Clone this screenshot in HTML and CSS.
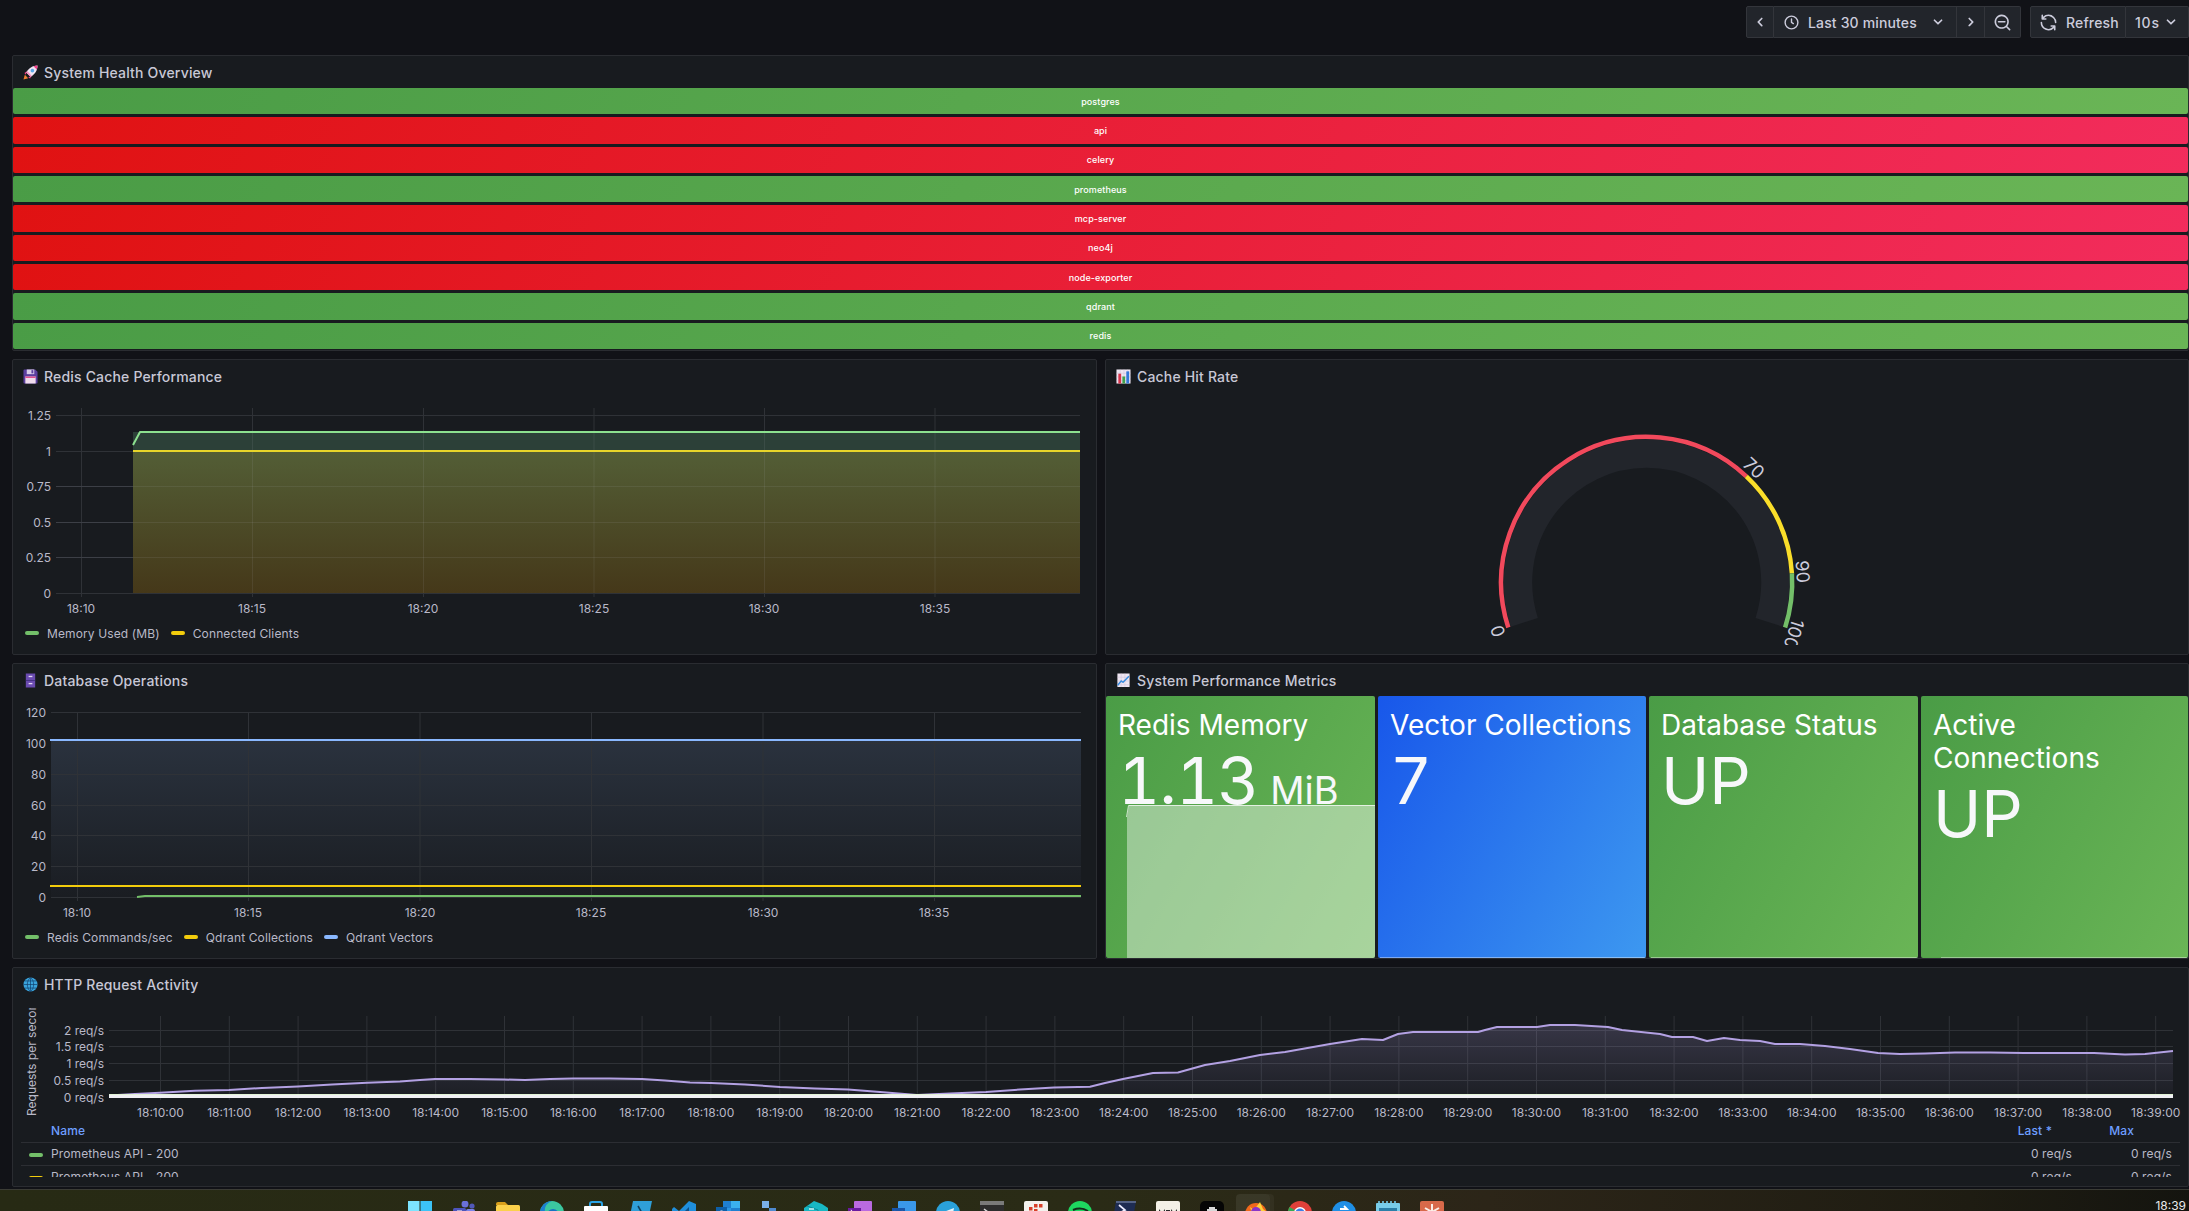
FILE: index.html
```html
<!DOCTYPE html>
<html>
	<head>
		<meta charset="UTF-8">
		<title>System Dashboard - Grafana</title>
		<link rel="stylesheet" href="styles.css">
	</head>
	<body>
		<div class="topbar">
			<div class="btn-group">
				<div class="btn btn-arrow"><svg class="ico" viewBox="0 0 24 24"><path d="M11.29,12l3.54-3.54a1,1,0,0,0,0-1.41,1,1,0,0,0-1.42,0L9.17,11.29a1,1,0,0,0,0,1.42L13.41,17a1,1,0,0,0,.71.29,1,1,0,0,0,.71-.29,1,1,0,0,0,0-1.41Z"/></svg></div>
				<div class="btn btn-time"><svg class="ico ico-lg" viewBox="0 0 24 24"><path d="M15.09814,12.63379,13,11.42285V7a1,1,0,0,0-2,0v5a1.00025,1.00025,0,0,0,.5.86621l2.59814,1.5a1.00016,1.00016,0,1,0,1-1.73242ZM12,2A10,10,0,1,0,22,12,10.01114,10.01114,0,0,0,12,2Zm0,18a8,8,0,1,1,8-8A8.00917,8.00917,0,0,1,12,20Z"/></svg><span class="btn-label">Last 30 minutes</span><svg class="ico caret" viewBox="0 0 24 24"><path d="M17,9.17a1,1,0,0,0-1.41,0L12,12.71,8.46,9.17a1,1,0,0,0-1.41,0,1,1,0,0,0,0,1.42l4.24,4.24a1,1,0,0,0,1.42,0L17,10.59A1,1,0,0,0,17,9.17Z"/></svg></div>
				<div class="btn btn-arrow"><svg class="ico" viewBox="0 0 24 24"><path d="M14.83,11.29,10.59,7.05a1,1,0,0,0-1.42,0,1,1,0,0,0,0,1.41L12.71,12,9.17,15.54a1,1,0,0,0,0,1.41,1,1,0,0,0,.71.29,1,1,0,0,0,.71-.29l4.24-4.24A1,1,0,0,0,14.83,11.29Z"/></svg></div>
				<div class="btn btn-zoom"><svg class="ico ico-xl" viewBox="0 0 24 24"><path d="M21.71,20.29,18,16.61A9,9,0,1,0,16.61,18l3.68,3.68a1,1,0,0,0,1.42,0A1,1,0,0,0,21.71,20.29ZM11,18a7,7,0,1,1,7-7A7,7,0,0,1,11,18Zm4-8H7a1,1,0,0,0,0,2h8a1,1,0,0,0,0-2Z"/></svg></div>
			</div>
			<div class="btn-group">
				<div class="btn btn-refresh"><svg class="ico ico-xl" viewBox="0 0 24 24"><path d="M19.91,15.51H15.38a1,1,0,0,0,0,2h2.4A8,8,0,0,1,4,12a1,1,0,0,0-2,0,10,10,0,0,0,16.88,7.23V21a1,1,0,0,0,2,0V16.5A1,1,0,0,0,19.91,15.51ZM12,2A10,10,0,0,0,5.12,4.77V3a1,1,0,0,0-2,0V7.5a1,1,0,0,0,1,1h4.5a1,1,0,0,0,0-2H6.22A8,8,0,0,1,20,12a1,1,0,0,0,2,0A10,10,0,0,0,12,2Z"/></svg><span class="btn-label">Refresh</span></div>
				<div class="btn btn-interval"><span class="btn-label">10s</span><svg class="ico caret" viewBox="0 0 24 24"><path d="M17,9.17a1,1,0,0,0-1.41,0L12,12.71,8.46,9.17a1,1,0,0,0-1.41,0,1,1,0,0,0,0,1.42l4.24,4.24a1,1,0,0,0,1.42,0L17,10.59A1,1,0,0,0,17,9.17Z"/></svg></div>
			</div>
		</div>

		<div class="dash">
			<section class="panel panel-wide">
				<h2 class="panel-title">
					<svg class="emoji" viewBox="0 0 16 16"><path d="M2 10.5 0.5 15.5 5.5 14Z" fill="#f08030"/><path d="M4 7 1.5 8.5 3 10.5ZM9 12 7.5 14.5 5.5 13Z" fill="#f0408a"/><path d="M15.5 .5C10.5 .5 5.5 3.5 3.5 8L8 12.5C12.5 10.5 15.5 5.5 15.5 .5Z" fill="#eee4f2"/><path d="M15.5 .5C14 .5 12.5 .8 11.2 1.3L14.7 4.8C15.2 3.5 15.5 2 15.5 .5Z" fill="#f0408a"/><path d="M3.5 8 8 12.5 9.5 11.6 4.4 6.5Z" fill="#f78fc0"/><circle cx="10" cy="6" r="1.9" fill="#5aa7e8"/></svg>
					System Health Overview
				</h2>
				<div class="health">
					<div class="bar bar-ok">postgres</div>
					<div class="bar bar-bad">api</div>
					<div class="bar bar-bad">celery</div>
					<div class="bar bar-ok">prometheus</div>
					<div class="bar bar-bad">mcp-server</div>
					<div class="bar bar-bad">neo4j</div>
					<div class="bar bar-bad">node-exporter</div>
					<div class="bar bar-ok">qdrant</div>
					<div class="bar bar-ok">redis</div>
				</div>
			</section>

			<section class="panel">
				<h2 class="panel-title">
					<svg class="emoji" viewBox="0 0 16 16"><path d="M1.5 .5H13L15.5 3V14.5A1 1 0 0 1 14.5 15.5H1.5A1 1 0 0 1 .5 14.5V1.5A1 1 0 0 1 1.5 .5Z" fill="#5b3f9f"/><rect x="4" y=".5" width="8" height="5" fill="#d9cdea"/><rect x="9" y="1.2" width="2" height="3.4" fill="#5b3f9f"/><rect x="2.5" y="8" width="11" height="7.5" fill="#f0dcec"/><rect x="2.5" y="8" width="11" height="1.6" fill="#e0508f"/></svg>
					Redis Cache Performance
				</h2>
				<svg class="chart" viewBox="13 392 1083 226" width="1083" height="226">
					<defs>
						<linearGradient id="redisFill" x1="0" y1="0" x2="0" y2="1"><stop offset="0" stop-color="#535e36"/><stop offset="1" stop-color="#453819"/></linearGradient>
					</defs>
					<path class="grid" d="M56 415.5H1080M56 451.5H1080M56 486.5H1080M56 522.5H1080M56 557.5H1080M56 593.5H1080M81.5 408V597M252.5 408V597M423.5 408V597M594 408V597M764.5 408V597M935 408V597"/>
					<rect x="133" y="432" width="947" height="20" fill="#2c4038"/>
					<rect x="133" y="451" width="947" height="142" fill="url(#redisFill)"/>
					<path class="grid-over" d="M56 486.5H1080M56 522.5H1080M56 557.5H1080M252.5 432V593M423.5 432V593M594 432V593M764.5 432V593M935 432V593"/>
					<path class="series" stroke="#8ce08f" d="M133 445 140 432H1080"/>
					<path class="series" stroke="#e8d52a" d="M133 451H1080"/>
					<g class="ylab">
						<text x="51" y="415">1.25</text><text x="51" y="451">1</text><text x="51" y="486">0.75</text><text x="51" y="522">0.5</text><text x="51" y="557">0.25</text><text x="51" y="593">0</text>
					</g>
					<g class="xlab">
						<text x="81" y="608">18:10</text><text x="252" y="608">18:15</text><text x="423" y="608">18:20</text><text x="594" y="608">18:25</text><text x="764" y="608">18:30</text><text x="935" y="608">18:35</text>
					</g>
				</svg>
				<div class="legend">
					<span class="legend-item"><i class="swatch swatch-green"></i>Memory Used (MB)</span>
					<span class="legend-item"><i class="swatch swatch-yellow"></i>Connected Clients</span>
				</div>
			</section>

			<section class="panel">
				<h2 class="panel-title">
					<svg class="emoji" viewBox="0 0 16 16"><rect x=".5" y=".5" width="15" height="15" fill="#efe6f2"/><path d="M.5 4.5H15.5M.5 8.5H15.5M.5 12.5H15.5M4.5 .5V15.5M8.5 .5V15.5M12.5 .5V15.5" stroke="#c9bcd6" stroke-width=".5"/><rect x="2.5" y="5" width="3" height="10.5" fill="#d8344a"/><rect x="6.8" y="8" width="3" height="7.5" fill="#3fa24c"/><rect x="11" y="2.5" width="3" height="13" fill="#3478d8"/></svg>
					Cache Hit Rate
				</h2>
				<svg class="chart" viewBox="1106 392 1082 262" width="1082" height="262">
					<defs><clipPath id="gaugeClip"><rect x="1106" y="392" width="1082" height="253"/></clipPath></defs>
					<path d="M1524.3 622.3A128.75 128.75 0 1 1 1769.1 622.3" fill="none" stroke="#22252b" stroke-width="28.5"/>
					<path class="arc" stroke="#f2495c" d="M1508.3 627.5A145.5 145.5 0 0 1 1746.3 476.4"/>
					<path class="arc" stroke="#fade2a" d="M1746.3 476.4A145.5 145.5 0 0 1 1791.9 573.4"/>
					<path class="arc" stroke="#73bf69" d="M1791.9 573.4A145.5 145.5 0 0 1 1785.1 627.5"/>
					<g class="gauge-lab" clip-path="url(#gaugeClip)">
						<text transform="translate(1497.7 631) rotate(-108)">0</text>
						<text transform="translate(1754 468) rotate(43.2)">70</text>
						<text transform="translate(1802.7 571.7) rotate(86.4)">90</text>
						<text transform="translate(1794 634) rotate(108)">100</text>
					</g>
				</svg>
			</section>

			<section class="panel">
				<h2 class="panel-title">
					<svg class="emoji" viewBox="0 0 16 16"><path d="M3 .5H13V15.5H3Z" fill="#6a4bb0"/><path d="M3 7.6H13V8.4H3Z" fill="#3d2a78"/><rect x="6" y="3" width="4" height="1.4" fill="#e4d8f4"/><rect x="6" y="10.6" width="4" height="1.4" fill="#e4d8f4"/></svg>
					Database Operations
				</h2>
				<svg class="chart" viewBox="13 696 1083 226" width="1083" height="226">
					<defs>
						<linearGradient id="dbFill" x1="0" y1="0" x2="0" y2="1"><stop offset="0" stop-color="#2a323e"/><stop offset="1" stop-color="#1a1d22"/></linearGradient>
					</defs>
					<rect x="51" y="740" width="1030" height="157" fill="url(#dbFill)"/>
					<path class="grid" d="M51 712.5H1081M51 743.5H1081M51 774.5H1081M51 805.5H1081M51 835.5H1081M51 866.5H1081M51 897.5H1081M77.5 712V901M248.5 712V901M420 712V901M591.5 712V901M763 712V901M934.5 712V901"/>
					<path class="series" stroke="#73bf69" d="M137 897 145 896H1081"/>
					<path class="series" stroke="#f2cc0c" d="M50 886H1081"/>
					<path class="series" stroke="#8ab8ff" d="M50 740H1081"/>
					<g class="ylab">
						<text x="46" y="712">120</text><text x="46" y="743">100</text><text x="46" y="774">80</text><text x="46" y="805">60</text><text x="46" y="835">40</text><text x="46" y="866">20</text><text x="46" y="897">0</text>
					</g>
					<g class="xlab">
						<text x="77" y="912">18:10</text><text x="248" y="912">18:15</text><text x="420" y="912">18:20</text><text x="591" y="912">18:25</text><text x="763" y="912">18:30</text><text x="934" y="912">18:35</text>
					</g>
				</svg>
				<div class="legend">
					<span class="legend-item"><i class="swatch swatch-green"></i>Redis Commands/sec</span>
					<span class="legend-item"><i class="swatch swatch-yellow"></i>Qdrant Collections</span>
					<span class="legend-item"><i class="swatch swatch-blue"></i>Qdrant Vectors</span>
				</div>
			</section>

			<section class="panel">
				<h2 class="panel-title">
					<svg class="emoji" viewBox="0 0 16 16"><path d="M1.5 .5H14.5V15H1.5Z" fill="#efe6f2"/><path d="M1.5 4.5H14.5M1.5 8.5H14.5M1.5 12.5H14.5M5.5 .5V15M9.5 .5V15" stroke="#c9bcd6" stroke-width=".5"/><path d="M1.8 13 5.5 8.5 7.5 10 13.8 3.5" fill="none" stroke="#3c8de0" stroke-width="1.6"/></svg>
					System Performance Metrics
				</h2>
				<div class="stats">
					<div class="tile tile-green">
						<div class="tile-title">Redis Memory</div>
						<div class="tile-value"><span class="tile-num">1.13</span> <span class="tile-unit">MiB</span></div>
						<svg class="spark" viewBox="0 0 269 153" width="269" height="153"><path d="M21 12 23 0H269V153H21Z" fill="#fff" fill-opacity=".42"/><path d="M20.5 12 22.5 .5H269" fill="none" stroke="#fff" stroke-opacity=".7"/></svg>
					</div>
					<div class="tile tile-blue">
						<div class="tile-title">Vector Collections</div>
						<div class="tile-value">7</div>
						<div class="baseline"></div>
					</div>
					<div class="tile tile-green">
						<div class="tile-title">Database Status</div>
						<div class="tile-value">UP</div>
						<div class="baseline"></div>
					</div>
					<div class="tile tile-green">
						<div class="tile-title">Active Connections</div>
						<div class="tile-value">UP</div>
						<div class="baseline baseline-late"></div>
					</div>
				</div>
			</section>

			<section class="panel panel-wide">
				<h2 class="panel-title">
					<svg class="emoji" viewBox="0 0 16 16"><circle cx="8" cy="8" r="7.5" fill="#3aa4dc"/><path d="M.5 8H15.5M1.6 4.2H14.4M1.6 11.8H14.4M8 .5V15.5M8 .5C3.5 4 3.5 12 8 15.5M8 .5C12.5 4 12.5 12 8 15.5" fill="none" stroke="#103a66" stroke-width=".7"/></svg>
					HTTP Request Activity
				</h2>
				<svg class="chart" viewBox="13 1000 2175 122" width="2175" height="122">
					<defs>
						<linearGradient id="httpFill" x1="0" y1="0" x2="0" y2="1"><stop offset="0" stop-color="#b3a1e3" stop-opacity=".2"/><stop offset="1" stop-color="#b3a1e3" stop-opacity=".03"/></linearGradient>
						<clipPath id="axisClip"><rect x="13" y="1008" width="30" height="110"/></clipPath>
					</defs>
					<path class="grid" d="M109 1030.5H2173M109 1046.5H2173M109 1063.5H2173M109 1080.5H2173M160.5 1016V1100M229.3 1016V1100M298.1 1016V1100M366.9 1016V1100M435.7 1016V1100M504.5 1016V1100M573.3 1016V1100M642.1 1016V1100M710.9 1016V1100M779.7 1016V1100M848.5 1016V1100M917.3 1016V1100M986.1 1016V1100M1054.9 1016V1100M1123.7 1016V1100M1192.5 1016V1100M1261.3 1016V1100M1330.1 1016V1100M1398.9 1016V1100M1467.7 1016V1100M1536.5 1016V1100M1605.3 1016V1100M1674.1 1016V1100M1742.9 1016V1100M1811.7 1016V1100M1880.5 1016V1100M1949.3 1016V1100M2018.1 1016V1100M2086.9 1016V1100M2155.7 1016V1100"/>
					<path fill="url(#httpFill)" d="M109 1095.5 135 1094 160 1092.7 195 1090.8 229 1090 262 1088 298 1086.5 332 1084.5 367 1082.7 400 1081.5 420 1080 435 1079 470 1079 504 1079.5 525 1080 550 1079 573 1078.5 610 1078.5 642 1079 665 1080.5 690 1082.5 711 1083 745 1084.5 780 1087 815 1088.5 848 1089.5 880 1092 917 1095 950 1093.5 986 1092 1020 1089.5 1054 1087.6 1090 1086.7 1105 1083 1123 1079 1153 1073 1178 1072.5 1205 1065 1230 1061 1260 1055 1285 1052 1330 1044 1362 1039 1383 1040 1398 1034 1413 1032 1478 1032 1485 1030 1497 1027 1537 1027 1550 1025 1575 1025 1608 1027 1622 1030 1660 1034 1672 1037 1693 1037 1707 1041 1724 1038 1740 1040 1760 1041 1775 1044 1800 1044 1825 1046 1850 1049 1878 1053 1900 1054 1925 1053.5 1955 1052.5 1990 1052.5 2024 1053 2060 1053 2094 1053 2125 1054.5 2145 1054 2173 1051V1096H109Z"/>
					<path class="series" stroke="#b3a1e3" d="M109 1095.5 135 1094 160 1092.7 195 1090.8 229 1090 262 1088 298 1086.5 332 1084.5 367 1082.7 400 1081.5 420 1080 435 1079 470 1079 504 1079.5 525 1080 550 1079 573 1078.5 610 1078.5 642 1079 665 1080.5 690 1082.5 711 1083 745 1084.5 780 1087 815 1088.5 848 1089.5 880 1092 917 1095 950 1093.5 986 1092 1020 1089.5 1054 1087.6 1090 1086.7 1105 1083 1123 1079 1153 1073 1178 1072.5 1205 1065 1230 1061 1260 1055 1285 1052 1330 1044 1362 1039 1383 1040 1398 1034 1413 1032 1478 1032 1485 1030 1497 1027 1537 1027 1550 1025 1575 1025 1608 1027 1622 1030 1660 1034 1672 1037 1693 1037 1707 1041 1724 1038 1740 1040 1760 1041 1775 1044 1800 1044 1825 1046 1850 1049 1878 1053 1900 1054 1925 1053.5 1955 1052.5 1990 1052.5 2024 1053 2060 1053 2094 1053 2125 1054.5 2145 1054 2173 1051"/>
					<rect x="109" y="1094" width="2064" height="4" fill="#f0f0f4"/>
					<rect x="109" y="1094" width="2064" height="1" fill="#e2f3d6"/>
					<g clip-path="url(#axisClip)"><text class="axis-title" transform="translate(31 1116) rotate(-90)">Requests per second</text></g>
					<g class="ylab">
						<text x="104" y="1030">2 req/s</text><text x="104" y="1046">1.5 req/s</text><text x="104" y="1063">1 req/s</text><text x="104" y="1080">0.5 req/s</text><text x="104" y="1097">0 req/s</text>
					</g>
					<g class="xlab">
						<text x="160.5" y="1112">18:10:00</text><text x="229.3" y="1112">18:11:00</text><text x="298.1" y="1112">18:12:00</text><text x="366.9" y="1112">18:13:00</text><text x="435.7" y="1112">18:14:00</text><text x="504.5" y="1112">18:15:00</text><text x="573.3" y="1112">18:16:00</text><text x="642.1" y="1112">18:17:00</text><text x="710.9" y="1112">18:18:00</text><text x="779.7" y="1112">18:19:00</text><text x="848.5" y="1112">18:20:00</text><text x="917.3" y="1112">18:21:00</text><text x="986.1" y="1112">18:22:00</text><text x="1054.9" y="1112">18:23:00</text><text x="1123.7" y="1112">18:24:00</text><text x="1192.5" y="1112">18:25:00</text><text x="1261.3" y="1112">18:26:00</text><text x="1330.1" y="1112">18:27:00</text><text x="1398.9" y="1112">18:28:00</text><text x="1467.7" y="1112">18:29:00</text><text x="1536.5" y="1112">18:30:00</text><text x="1605.3" y="1112">18:31:00</text><text x="1674.1" y="1112">18:32:00</text><text x="1742.9" y="1112">18:33:00</text><text x="1811.7" y="1112">18:34:00</text><text x="1880.5" y="1112">18:35:00</text><text x="1949.3" y="1112">18:36:00</text><text x="2018.1" y="1112">18:37:00</text><text x="2086.9" y="1112">18:38:00</text><text x="2155.7" y="1112">18:39:00</text>
					</g>
				</svg>
				<div class="legend-table-wrap">
					<table class="legend-table">
						<thead>
							<tr>
								<th class="col-name">Name</th>
								<th class="col-last">Last *</th>
								<th class="col-max">Max</th>
							</tr>
						</thead>
						<tbody>
							<tr>
								<td class="col-name"><i class="swatch swatch-green"></i>Prometheus API - 200</td>
								<td class="col-num">0 req/s</td>
								<td class="col-num">0 req/s</td>
							</tr>
							<tr>
								<td class="col-name"><i class="swatch swatch-yellow"></i>Prometheus API - 200</td>
								<td class="col-num">0 req/s</td>
								<td class="col-num">0 req/s</td>
							</tr>
						</tbody>
					</table>
				</div>
			</section>
		</div>

		<div class="taskbar">
			<div class="task-icons">
				<svg class="task" viewBox="0 0 24 24"><rect width="11.5" height="11.5" fill="#7de4ff"/><rect x="12.5" width="11.5" height="11.5" fill="#3cc3f7"/><rect y="12.5" width="11.5" height="11.5" fill="#2aa8ec"/><rect x="12.5" y="12.5" width="11.5" height="11.5" fill="#1a8ee0"/></svg>
				<svg class="task" viewBox="0 0 24 24"><circle cx="13" cy="3" r="3.5" fill="#6a70d8"/><circle cx="20" cy="5" r="2.6" fill="#5158b8"/><rect x="1" y="7" width="13" height="13" rx="1.5" fill="#4d54bb"/><rect x="14" y="8" width="9" height="12" rx="2" fill="#7b83eb"/><rect x="5" y="9.5" width="5" height="2" fill="#fff"/></svg>
				<svg class="task" viewBox="0 0 24 24"><path d="M0 3A2 2 0 0 1 2 1H9L12 4H0Z" fill="#d9a01c"/><rect y="4" width="24" height="20" rx="1.5" fill="#fbd14b"/></svg>
				<svg class="task" viewBox="0 0 24 24"><circle cx="12" cy="12" r="12" fill="#3bc7a0"/><path d="M0 12A12 12 0 0 1 12 0C6 2 3 8 6 14 8 18 3 18 0 12Z" fill="#1c7fd0"/><circle cx="13" cy="14" r="6" fill="#1573c4"/></svg>
				<svg class="task" viewBox="0 0 24 24"><path d="M6 5V3A2 2 0 0 1 8 1H16A2 2 0 0 1 18 3V5" fill="none" stroke="#2aa5e8" stroke-width="2"/><rect y="5" width="24" height="19" rx="1" fill="#fff"/></svg>
				<svg class="task" viewBox="0 0 24 24"><path d="M5 0H24L19 24H0Z" fill="#2f9fd8"/><path d="M10 5 14 12" stroke="#0e3f5c" stroke-width="1.6"/></svg>
				<svg class="task" viewBox="0 0 24 24"><path d="M17 0 24 3V21L17 24 7 14 2 18 0 16V8L2 6 7 10Z" fill="#1f8fdc"/><path d="M17 6 11 12 17 18Z" fill="#0f4f86"/></svg>
				<svg class="task" viewBox="0 0 24 24"><rect x="7" width="8" height="7" fill="#1f7fd0"/><rect x="15" width="9" height="7" fill="#3ab0f0"/><rect x="7" y="7" width="8" height="7" fill="#2a96e4"/><rect x="15" y="7" width="9" height="7" fill="#1f7fd0"/><rect y="6" width="11" height="12" fill="#0d5fa8"/><circle cx="5.5" cy="12" r="2.5" fill="#fff"/></svg>
				<svg class="task" viewBox="0 0 24 24"><rect x="2" width="7" height="7" fill="#7ab0e8"/><rect x="9" y="7" width="7" height="7" fill="#4f8ad0"/><rect x="16" y="13" width="8" height="7" fill="#d8d8d8"/></svg>
				<svg class="task" viewBox="0 0 24 24"><path d="M10 0 18 3 24 7V16L12 22 0 16V7L3 5Z" fill="#18b8c4"/><path d="M3 5 14 9V20" fill="none" stroke="#0d8a98" stroke-width="1"/><path d="M5 8H10" stroke="#e0f4f6" stroke-width="1.4"/></svg>
				<svg class="task" viewBox="0 0 24 24"><rect x="6" y="0" width="18" height="24" rx="1" fill="#ba6ae0"/><rect y="7" width="13" height="13" fill="#6a1aa0"/><path d="M3.5 17V10L9.5 17V10" fill="none" stroke="#fff" stroke-width="1.3"/></svg>
				<svg class="task" viewBox="0 0 24 24"><rect x="6" y="0" width="18" height="24" rx="1" fill="#3a98ea"/><rect y="7" width="13" height="13" fill="#1855a8"/><path d="M2.5 10 4.5 17 6.5 12 8.5 17 10.5 10" fill="none" stroke="#fff" stroke-width="1.2"/></svg>
				<svg class="task" viewBox="0 0 24 24"><circle cx="12" cy="12" r="12" fill="#2aa1da"/><path d="M5 12 18 7 16 18Z" fill="#e8f4fa"/></svg>
				<svg class="task" viewBox="0 0 24 24"><rect width="24" height="24" rx="2" fill="#2d2d2d"/><rect width="24" height="4" fill="#7a7a7a"/><path d="M4 8 8 11 4 14" fill="none" stroke="#ddd" stroke-width="1.5"/></svg>
				<svg class="task" viewBox="0 0 24 24"><rect width="24" height="24" rx="2" fill="#f4f2ee"/><rect x="5" y="6" width="3.5" height="3.5" fill="#d8402a"/><rect x="10" y="3" width="3.5" height="3.5" fill="#d8402a"/><rect x="15" y="3" width="3.5" height="3.5" fill="#d8402a"/><rect x="5" y="11" width="3.5" height="3.5" fill="#d8402a"/><rect x="10" y="8" width="3.5" height="3.5" fill="#d8402a"/></svg>
				<svg class="task" viewBox="0 0 24 24"><circle cx="12" cy="12" r="12" fill="#1ed760"/><path d="M5 9C10 7 15 7 20 10" fill="none" stroke="#14291a" stroke-width="2"/></svg>
				<svg class="task" viewBox="0 0 24 24"><path d="M4 0H24L20 24H0Z" fill="#1e2c52"/><path d="M4 1H24" stroke="#8a98b8" stroke-width="1"/><path d="M7 4 13 9 6 13" fill="none" stroke="#eef" stroke-width="1.8"/></svg>
				<svg class="task" viewBox="0 0 24 24"><rect width="24" height="24" rx="2" fill="#f4f0e6"/><path d="M3 8 6 12 9 8V14H3ZM15 8 18 12 21 8V14H15ZM10 9H14V15H10Z" fill="#2a2a2a"/></svg>
				<svg class="task" viewBox="0 0 24 24"><rect width="24" height="24" rx="5" fill="#050505"/><path d="M9 6H15V8H17V16H7V8H9Z" fill="#d8d8d8"/></svg>
				<div class="task task-active"><svg class="task-inner" viewBox="0 0 24 24"><circle cx="12" cy="13" r="11" fill="#f2691c"/><path d="M6 6 10 9 16 1 19 8 24 12 14 12 8 12Z" fill="#ffd23a"/><circle cx="12" cy="11" r="5" fill="#8a35c8"/></svg></div>
				<svg class="task" viewBox="0 0 24 24"><circle cx="12" cy="12" r="12" fill="#e0403a"/><path d="M12 24A12 12 0 0 1 1.5 6L12 12Z" fill="#34a853"/><path d="M24 12A12 12 0 0 1 12 24L12 12H24Z" fill="#fbc02d"/><circle cx="12" cy="12" r="6" fill="#fff"/><circle cx="12" cy="12" r="4.6" fill="#3a80ea"/></svg>
				<svg class="task" viewBox="0 0 24 24"><circle cx="12" cy="12" r="12" fill="#1f8fe6"/><path d="M8 8H15L12 5M16 13H9L12 16" fill="none" stroke="#fff" stroke-width="1.8"/></svg>
				<svg class="task" viewBox="0 0 24 24"><rect y="2" width="24" height="22" rx="1" fill="#78cdea"/><path d="M3 0V3M7 0V3M11 0V3M15 0V3M19 0V3" stroke="#78cdea" stroke-width="1.6"/><rect x="3" y="7" width="18" height="3" fill="#2b7fa8"/></svg>
				<svg class="task" viewBox="0 0 24 24"><rect width="24" height="24" rx="2" fill="#d8694a"/><path d="M12 3V19M5 7 19 15M19 7 5 15" stroke="#fbeee8" stroke-width="2"/></svg>
			</div>
			<span class="clock">18:39</span>
		</div>
	</body>
</html>
```

FILE: styles.css
```css
html, body {
	margin: 0;
	height: 100%;
}
body {
	width: 2189px;
	height: 1211px;
	overflow: hidden;
	display: flex;
	flex-direction: column;
	background-color: #111217;
	color: #ccccdc;
	font-family: Inter, "Noto Sans", sans-serif;
	font-size: 12px;
}

/* top toolbar */
.topbar {
	height: 55px;
	flex: none;
	box-sizing: border-box;
	padding-top: 6px;
	display: flex;
	justify-content: flex-end;
	gap: 9px;
}
.btn-group {
	display: flex;
	height: 32px;
}
.btn {
	display: flex;
	align-items: center;
	box-sizing: border-box;
	height: 32px;
	background-color: #22252b;
	border: 1px solid #33353b;
	border-left-width: 0;
	font-size: 14px;
	font-weight: 500;
	letter-spacing: 0.15px;
}
.btn:first-child {
	border-left-width: 1px;
	border-radius: 2px 0 0 2px;
}
.btn:last-child {
	border-radius: 0 2px 2px 0;
}
.btn-arrow {
	width: 28px;
	justify-content: center;
}
.btn-time {
	width: 183px;
	padding-left: 9px;
}
.btn-time .btn-label {
	margin-left: 8px;
}
.btn-time .caret {
	margin-left: 11px;
}
.btn-zoom {
	width: 36px;
	justify-content: center;
}
.btn-refresh {
	width: 96px;
	padding-left: 8px;
}
.btn-refresh .btn-label {
	margin-left: 8px;
}
.btn-interval {
	width: 63px;
	padding-left: 9px;
}
.btn-interval .btn-label {
	letter-spacing: 0.8px;
}
.btn-interval .caret {
	margin-left: 1px;
}
.ico {
	width: 20px;
	height: 20px;
	flex: none;
	fill: #ccccdc;
}
.ico-lg {
	width: 17px;
	height: 17px;
}
.ico-xl {
	width: 19px;
	height: 19px;
}

/* dashboard grid */
.dash {
	flex: none;
	margin-left: 12px;
	display: grid;
	grid-template-columns: 1085px 1084px;
	grid-template-rows: 295.5px 295.5px 295.5px 220px;
	gap: 8.5px 8px;
}
.panel {
	box-sizing: border-box;
	min-width: 0;
	overflow: hidden;
	background-color: #181b1f;
	border: 1px solid #2a2c31;
	border-radius: 2px;
}
.panel-wide {
	grid-column: 1 / 3;
}
.panel-title {
	box-sizing: border-box;
	height: 32px;
	margin: 0;
	padding: 1px 0 0 10px;
	display: flex;
	align-items: center;
	gap: 6px;
	font-size: 14px;
	font-weight: 500;
	letter-spacing: 0.18px;
	color: #c8c8d6;
}
.emoji {
	width: 15px;
	height: 15px;
	flex: none;
}

/* health rows */
.health {
	display: grid;
	grid-template-rows: repeat(9, 1fr);
	gap: 3px;
	height: 261px;
}
.bar {
	display: flex;
	align-items: center;
	justify-content: center;
	border-radius: 2px;
	color: #fff;
	font-size: 9px;
	font-weight: 500;
	letter-spacing: 0.1px;
}
.bar-ok {
	background: linear-gradient(120deg, #4a9c46, #6ab556);
}
.bar-bad {
	background: linear-gradient(120deg, #e01212, #f22c5c);
}

/* charts */
.chart {
	display: block;
}
.grid {
	fill: none;
	stroke: #2f3237;
	stroke-width: 1;
}
.grid-over {
	fill: none;
	stroke: rgba(204, 204, 220, 0.09);
	stroke-width: 1;
}
.series {
	fill: none;
	stroke-width: 2;
	stroke-linejoin: round;
}
.ylab text, .xlab text, .axis-title {
	font-size: 12px;
	fill: #b9b9c8;
	dominant-baseline: central;
}
.ylab text {
	text-anchor: end;
}
.xlab text {
	text-anchor: middle;
}
.arc {
	fill: none;
	stroke-width: 4.5;
}
.gauge-lab text {
	font-size: 18px;
	fill: #ccccdc;
	text-anchor: middle;
	dominant-baseline: central;
}
.legend {
	height: 30px;
	padding-left: 12px;
	display: flex;
	align-items: center;
	gap: 11px;
	color: #b9b9c8;
	letter-spacing: 0.12px;
}
.legend-item {
	display: flex;
	align-items: center;
}
.swatch {
	display: inline-block;
	width: 14px;
	height: 4px;
	margin-right: 8px;
	border-radius: 2px;
}
.swatch-green {
	background-color: #73bf69;
}
.swatch-yellow {
	background-color: #f2cc0c;
}
.swatch-blue {
	background-color: #8ab8ff;
}

/* stat tiles */
.stats {
	display: grid;
	grid-template-columns: 269px 268px 269px 1fr;
	gap: 3px;
	height: 262px;
}
.tile {
	position: relative;
	overflow: hidden;
	box-sizing: border-box;
	padding: 13px 12px 0;
	color: #fff;
	border-radius: 2px;
}
.tile-green {
	background: linear-gradient(120deg, #4a9c46, #6ab556);
}
.tile-blue {
	background: linear-gradient(120deg, #1857ea, #3d98f0);
}
.tile-title {
	font-size: 28px;
	line-height: 33px;
}
.tile-value {
	margin-top: -1px;
	font-size: 65px;
	line-height: 79px;
	color: #f7f8fa;
	font-feature-settings: "tnum";
}
.tile-num {
	letter-spacing: -0.8px;
}
.tile-unit {
	margin-left: -6px;
	font-size: 38px;
}
.spark {
	position: absolute;
	left: 0;
	top: 109px;
}
.baseline {
	position: absolute;
	left: 2px;
	right: 0;
	bottom: 0;
	height: 1px;
	background-color: rgba(255, 255, 255, 0.4);
}
.baseline-late {
	left: 20px;
}

/* legend table */
.legend-table-wrap {
	height: 55px;
	overflow: hidden;
	margin: 0 8px;
}
.legend-table {
	width: 100%;
	border-collapse: collapse;
	table-layout: fixed;
	letter-spacing: 0.12px;
}
.legend-table th {
	box-sizing: border-box;
	height: 20px;
	padding: 0 0 2px;
	font-weight: 500;
	color: #6e9fff;
	border-bottom: 1px solid #2c2e33;
}
.legend-table td {
	height: 22px;
	padding: 0;
	color: #b9b9c8;
	border-bottom: 1px solid #2c2e33;
}
.col-name {
	text-align: left;
}
.legend-table th.col-name {
	padding-left: 30px;
}
td.col-name .swatch {
	margin: 0 8px 0 8px;
	vertical-align: middle;
}
.legend-table th.col-last {
	width: 100px;
	text-align: right;
	padding-right: 28px;
}
.legend-table th.col-max {
	width: 100px;
	text-align: right;
	padding-right: 46px;
}
.legend-table td.col-num {
	text-align: right;
	padding-right: 8px;
}

/* desktop taskbar, cut off by the bottom of the picture */
.taskbar {
	position: relative;
	flex: none;
	height: 22px;
	margin-top: 2px;
	box-sizing: border-box;
	overflow: hidden;
	border-top: 1px solid #3b3c35;
	background: linear-gradient(90deg, #272a14, #2a2b16 50%, #2c2518 68%, #1e1c12 90%, #14140f);
}
.task-icons {
	display: flex;
	gap: 20px;
	padding: 11px 0 0 407.5px;
}
.task {
	position: relative;
	width: 24px;
	height: 24px;
	flex: none;
}
.task-inner {
	position: relative;
	display: block;
	width: 24px;
	height: 24px;
}
.task-active::before {
	content: "";
	position: absolute;
	left: -8px;
	top: -7px;
	width: 34px;
	height: 30px;
	border-radius: 4px;
	background-color: rgba(255, 255, 255, 0.07);
	box-shadow: 4px 0 0 rgba(255, 255, 255, 0.04);
}
.clock {
	position: absolute;
	right: 3px;
	top: 8px;
	font-size: 12px;
	line-height: 15px;
	color: #e8e8ec;
}
```
